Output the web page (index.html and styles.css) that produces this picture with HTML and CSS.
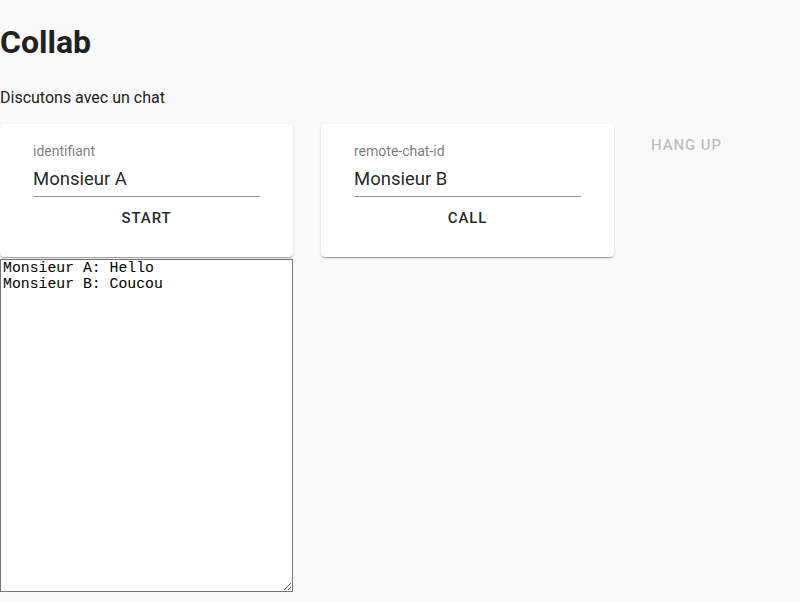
FILE: index.html
```html
<!DOCTYPE html>
<html lang="fr">
<head>
<meta charset="utf-8">
<title>Collab</title>
<link rel="stylesheet" href="styles.css">
</head>
<body>
<h1 class="title">Collab</h1>
<p class="subtitle">Discutons avec un chat</p>
<div class="row">
  <div class="card">
    <label class="field">
      <span class="field-label">identifiant</span>
      <input class="field-input" type="text" value="Monsieur A">
    </label>
    <button class="btn">Start</button>
  </div>
  <div class="card">
    <label class="field">
      <span class="field-label">remote-chat-id</span>
      <input class="field-input" type="text" value="Monsieur B">
    </label>
    <button class="btn">Call</button>
  </div>
  <button class="btn btn-disabled" disabled>Hang up</button>
</div>
<textarea class="log">Monsieur A: Hello
Monsieur B: Coucou</textarea>
</body>
</html>
```
FILE: styles.css
```css
html, body {
  margin: 0;
  padding: 0;
  background: #fafafa;
}
body {
  font-family: Roboto, "Liberation Sans", sans-serif;
  color: rgba(0, 0, 0, 0.87);
}
.title {
  margin: 24px 0 0;
  font-size: 32px;
  line-height: 37px;
  font-weight: 700;
  color: #212121;
}
.subtitle {
  margin: 25px 0 0;
  font-size: 16px;
  line-height: 24px;
  color: #212121;
}
.row {
  display: flex;
  align-items: flex-start;
  gap: 28px;
  margin-top: 14px;
}
.card {
  width: 293px;
  box-sizing: border-box;
  padding: 20px 33px 21px;
  background: #fff;
  border-radius: 4px;
  box-shadow: 0 2px 1px -1px rgba(0,0,0,.2), 0 1px 1px 0 rgba(0,0,0,.14), 0 1px 3px 0 rgba(0,0,0,.12);
  display: flex;
  flex-direction: column;
  align-items: center;
}
.field {
  display: flex;
  flex-direction: column;
  width: 227px;
}
.field-label {
  font-size: 14px;
  line-height: 15px;
  color: rgba(0, 0, 0, 0.54);
}
.field-input {
  font-family: Roboto, "Liberation Sans", sans-serif;
  font-size: 18.5px;
  line-height: 24px;
  color: rgba(0, 0, 0, 0.87);
  border: 0;
  border-bottom: 1px solid rgba(0, 0, 0, 0.42);
  background: transparent;
  padding: 8px 0 5px;
  margin: 0;
  outline: none;
  width: 100%;
}
.btn {
  font-family: Roboto, "Liberation Sans", sans-serif;
  font-size: 15px;
  font-weight: 500;
  letter-spacing: 0.9px;
  text-transform: uppercase;
  line-height: 24px;
  padding: 6px 8px;
  margin-top: 3px;
  border: 0;
  background: transparent;
  color: rgba(0, 0, 0, 0.87);
  border-radius: 4px;
}
.btn-disabled {
  color: rgba(0, 0, 0, 0.26);
  margin-left: 1px;
}
.log {
  display: block;
  box-sizing: border-box;
  width: 293px;
  height: 333px;
  margin: 2px 0 0;
  padding: 0 2px;
  border: 1px solid #767676;
  background: #fff;
  font-family: "Courier New", "Nimbus Mono PS", "FreeMono", "Liberation Mono", monospace;
  font-size: 14.8px;
  line-height: 16px;
  color: #000;
  resize: both;
}
```
